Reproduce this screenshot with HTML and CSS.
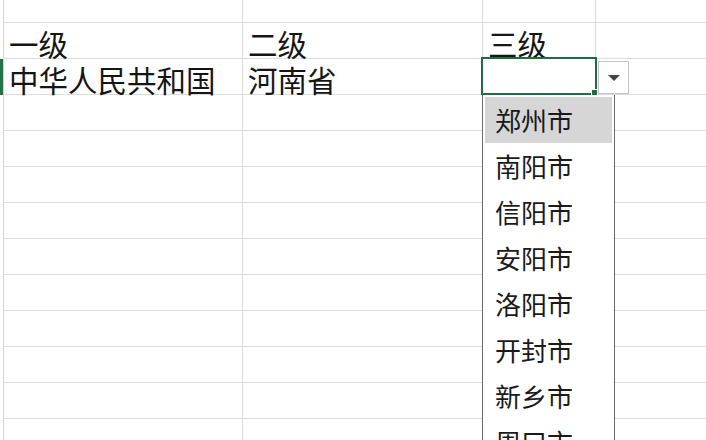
FILE: index.html
```html
<!DOCTYPE html>
<html lang="zh-CN">
<head>
<meta charset="utf-8">
<title>数据验证下拉列表</title>
<link rel="stylesheet" href="styles.css">
</head>
<body>
<div class="sheet">
  <div class="row top">
    <div class="hdr"></div><div class="cell a"></div><div class="cell b"></div><div class="cell c"></div><div class="cell d"></div>
  </div>
  <div class="row">
    <div class="hdr"></div><div class="cell a">一级</div><div class="cell b">二级</div><div class="cell c">三级</div><div class="cell d"></div>
  </div>
  <div class="row">
    <div class="hdr active"></div><div class="cell a">中华人民共和国</div><div class="cell b">河南省</div>
    <div class="cell c selected">
      <div class="sel-frame"><span class="handle"></span></div>
      <div class="dd-btn"><span class="tri"></span></div>
      <ul class="dd-list">
        <li class="item hot">郑州市</li>
        <li class="item">南阳市</li>
        <li class="item">信阳市</li>
        <li class="item">安阳市</li>
        <li class="item">洛阳市</li>
        <li class="item">开封市</li>
        <li class="item">新乡市</li>
        <li class="item">周口市</li>
      </ul>
    </div>
    <div class="cell d"></div>
  </div>
  <div class="row"><div class="hdr"></div><div class="cell a"></div><div class="cell b"></div><div class="cell c"></div><div class="cell d"></div></div>
  <div class="row"><div class="hdr"></div><div class="cell a"></div><div class="cell b"></div><div class="cell c"></div><div class="cell d"></div></div>
  <div class="row"><div class="hdr"></div><div class="cell a"></div><div class="cell b"></div><div class="cell c"></div><div class="cell d"></div></div>
  <div class="row"><div class="hdr"></div><div class="cell a"></div><div class="cell b"></div><div class="cell c"></div><div class="cell d"></div></div>
  <div class="row"><div class="hdr"></div><div class="cell a"></div><div class="cell b"></div><div class="cell c"></div><div class="cell d"></div></div>
  <div class="row"><div class="hdr"></div><div class="cell a"></div><div class="cell b"></div><div class="cell c"></div><div class="cell d"></div></div>
  <div class="row"><div class="hdr"></div><div class="cell a"></div><div class="cell b"></div><div class="cell c"></div><div class="cell d"></div></div>
  <div class="row"><div class="hdr"></div><div class="cell a"></div><div class="cell b"></div><div class="cell c"></div><div class="cell d"></div></div>
  <div class="row"><div class="hdr"></div><div class="cell a"></div><div class="cell b"></div><div class="cell c"></div><div class="cell d"></div></div>
  <div class="row"><div class="hdr"></div><div class="cell a"></div><div class="cell b"></div><div class="cell c"></div><div class="cell d"></div></div>
</div>
</body>
</html>
```

FILE: styles.css
```css
html, body {
  margin: 0;
  padding: 0;
  background: #ffffff;
}
body {
  width: 706px;
  height: 440px;
  overflow: hidden;
  font-family: "Noto Sans CJK SC", "Noto Sans", sans-serif;
  color: #151515;
}
.sheet {
  display: flex;
  flex-direction: column;
  width: 706px;
}
.row {
  display: flex;
  height: 36px;
  flex: none;
}
.row.top {
  height: 23px;
}
.hdr {
  width: 3px;
  flex: none;
  border-right: 1px solid #d4d4d4;
}
.hdr.active {
  background: #217346;
}
.cell {
  box-sizing: border-box;
  height: 100%;
  flex: none;
  border-right: 1px solid #dcdcdc;
  border-bottom: 1px solid #dcdcdc;
  display: flex;
  align-items: flex-end;
  padding-left: 5px;
  padding-bottom: 1px;
  font-size: 29.5px;
  line-height: 28px;
  white-space: nowrap;
}
.cell.a { width: 239px; }
.cell.b { width: 240px; }
.cell.c { width: 113px; }
.cell.d { flex: 1; border-right: none; }

.selected {
  position: relative;
}
.sel-frame {
  position: absolute;
  left: -2px;
  top: -2px;
  width: 116px;
  height: 38px;
  box-sizing: border-box;
  border: 2px solid #1f6b42;
  z-index: 5;
}
.handle {
  position: absolute;
  right: -3px;
  bottom: -3px;
  width: 5px;
  height: 5px;
  background: #1f6b42;
  border: 1px solid #ffffff;
}
.dd-btn {
  position: absolute;
  left: 115px;
  top: 2px;
  width: 31px;
  height: 33px;
  box-sizing: border-box;
  border: 1px solid #c4c4c4;
  background: #ffffff;
  display: flex;
  align-items: center;
  justify-content: center;
  z-index: 5;
}
.tri {
  width: 0;
  height: 0;
  border-left: 6px solid transparent;
  border-right: 6px solid transparent;
  border-top: 6px solid #444444;
}
.dd-list {
  position: absolute;
  left: -1px;
  top: 36px;
  width: 133px;
  height: 420px;
  margin: 0;
  padding: 2px 2px 0 2px;
  box-sizing: border-box;
  list-style: none;
  background: #ffffff;
  border-left: 1px solid #6a6a6a;
  border-right: 1px solid #6a6a6a;
  z-index: 10;
}
.item {
  height: 46px;
  display: flex;
  align-items: center;
  padding-left: 10px;
  font-size: 26px;
  line-height: 26px;
  color: #1a1a1a;
}
.item.hot {
  background: #d6d6d6;
}
```
